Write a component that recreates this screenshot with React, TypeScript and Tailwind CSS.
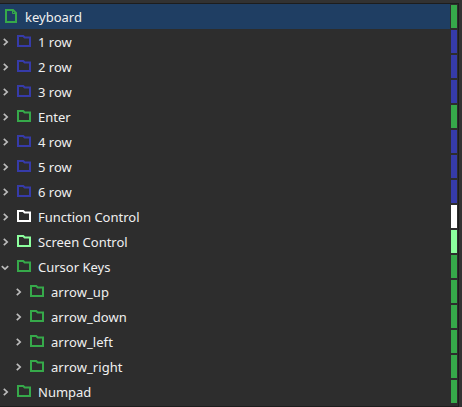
import React from 'react';

interface TreeItem {
  label: string;
  icon: string;
  bar: string;
  nested?: boolean;
  open?: boolean;
}

const items: TreeItem[] = [
  { label: '1 row', icon: 'text-[#363ba9]', bar: 'bg-[#363ba9]' },
  { label: '2 row', icon: 'text-[#363ba9]', bar: 'bg-[#363ba9]' },
  { label: '3 row', icon: 'text-[#363ba9]', bar: 'bg-[#363ba9]' },
  { label: 'Enter', icon: 'text-[#36a94a]', bar: 'bg-[#36a94a]' },
  { label: '4 row', icon: 'text-[#363ba9]', bar: 'bg-[#363ba9]' },
  { label: '5 row', icon: 'text-[#363ba9]', bar: 'bg-[#363ba9]' },
  { label: '6 row', icon: 'text-[#363ba9]', bar: 'bg-[#363ba9]' },
  { label: 'Function Control', icon: 'text-white', bar: 'bg-white' },
  { label: 'Screen Control', icon: 'text-[#8cff9e]', bar: 'bg-[#8cff9e]' },
  { label: 'Cursor Keys', icon: 'text-[#36a94a]', bar: 'bg-[#36a94a]', open: true },
  { label: 'arrow_up', icon: 'text-[#36a94a]', bar: 'bg-[#36a94a]', nested: true },
  { label: 'arrow_down', icon: 'text-[#36a94a]', bar: 'bg-[#36a94a]', nested: true },
  { label: 'arrow_left', icon: 'text-[#36a94a]', bar: 'bg-[#36a94a]', nested: true },
  { label: 'arrow_right', icon: 'text-[#36a94a]', bar: 'bg-[#36a94a]', nested: true },
  { label: 'Numpad', icon: 'text-[#36a94a]', bar: 'bg-[#36a94a]' },
];

const Chevron: React.FC<{ open?: boolean }> = ({ open }) => (
  <svg className="w-[10px] h-[10px] mt-px shrink-0 text-[#bcbcbc]" viewBox="0 0 10 10" fill="none" stroke="currentColor" strokeWidth="1.7">
    <path d={open ? 'M1.8 4.2 L5 7.2 L8.2 4.2' : 'M3.8 1.8 L7.2 5 L3.8 8.2'} />
  </svg>
);

const FolderIcon: React.FC<{ className: string }> = ({ className }) => (
  <svg className={`w-[14px] h-[12px] mb-px shrink-0 ${className}`} viewBox="0 0 14 12" fill="none" stroke="currentColor" strokeWidth="2">
    <path d="M1 1 H6.2 L7.7 2.5 H13 V11 H1 Z" />
  </svg>
);

const FileIcon: React.FC = () => (
  <svg className="w-[12px] h-[14px] mb-px shrink-0 text-[#36a94a]" viewBox="0 0 12 14" fill="none" stroke="currentColor" strokeWidth="2">
    <path d="M1 1 H8 L11 4 V13 H1 Z" />
    <path d="M7.5 1 V4.5 H11" strokeWidth="1" />
  </svg>
);

const ColorBar: React.FC<{ className: string }> = ({ className }) => (
  <div className={`w-[6px] h-[23px] ml-px shrink-0 ${className}`}></div>
);

const App: React.FC = () => {
  return (
    <div className="w-[462px] h-[407px] flex bg-[#323232] overflow-hidden font-['Noto_Sans',sans-serif] text-[13px] leading-[25px] text-[#f0f0f0]">
      <div className="w-[459px] mt-[3px] border-t border-r border-b border-[#1d1d1d] bg-[#2d2d2d]">

        <div className="flex items-center h-[25px]">
          <div className="flex items-center w-[450px] h-full pl-[5px] gap-[8px] bg-[#1f3e63]">
            <FileIcon />
            <span className="mt-[2px]">keyboard</span>
          </div>
          <ColorBar className="bg-[#36a94a]" />
        </div>

        {items.map((item) => (
          <div key={item.label} className="flex items-center h-[25px]">
            <div className={`flex items-center w-[450px] h-full ${item.nested ? 'pl-[13px] tracking-[0.07px]' : ''}`}>
              <Chevron open={item.open} />
              <FolderIcon className={`ml-[7px] mr-[7px] ${item.icon}`} />
              <span className="mt-[2px]">{item.label}</span>
            </div>
            <ColorBar className={item.bar} />
          </div>
        ))}
      </div>
    </div>
  );
};

export default App;
